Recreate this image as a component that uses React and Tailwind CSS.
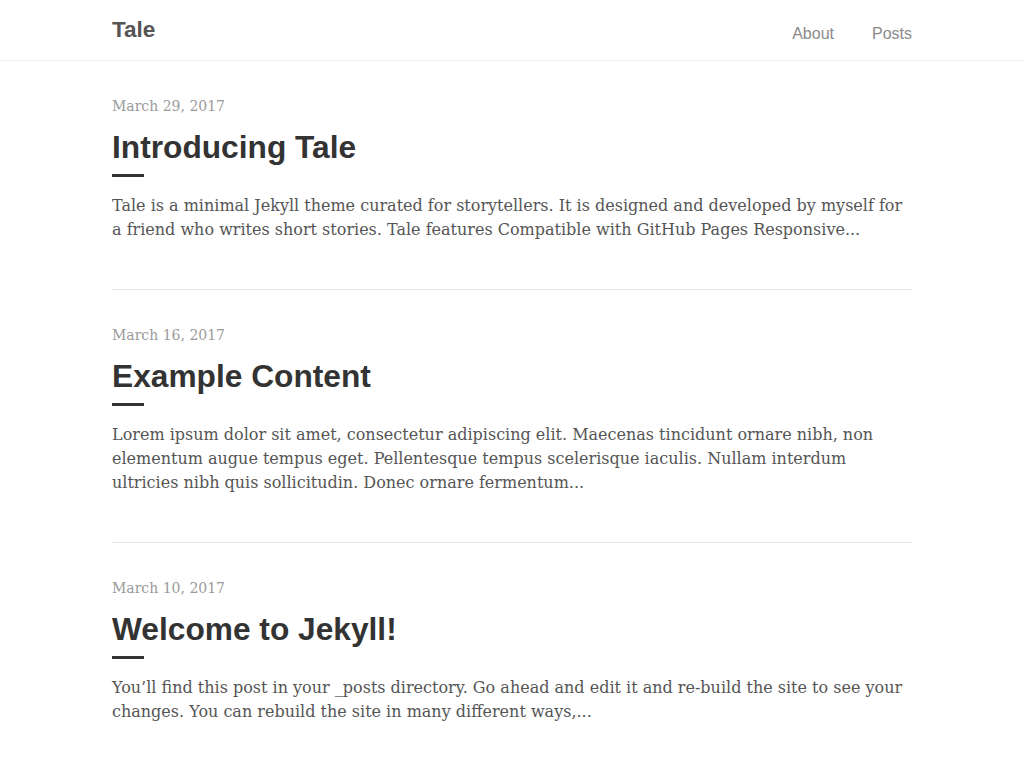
import React from 'react';

const posts = [
    {
        date: 'March 29, 2017',
        title: 'Introducing Tale',
        excerpt: 'Tale is a minimal Jekyll theme curated for storytellers. It is designed and developed by myself for a friend who writes short stories. Tale features Compatible with GitHub Pages Responsive...',
    },
    {
        date: 'March 16, 2017',
        title: 'Example Content',
        excerpt: 'Lorem ipsum dolor sit amet, consectetur adipiscing elit. Maecenas tincidunt ornare nibh, non elementum augue tempus eget. Pellentesque tempus scelerisque iaculis. Nullam interdum ultricies nibh quis sollicitudin. Donec ornare fermentum...',
    },
    {
        date: 'March 10, 2017',
        title: 'Welcome to Jekyll!',
        excerpt: 'You’ll find this post in your _posts directory. Go ahead and edit it and re-build the site to see your changes. You can rebuild the site in many different ways,...',
    },
];

const sans = "font-['Liberation_Sans',Arial,sans-serif]";
const serif = "font-['DejaVu_Serif','Liberation_Serif',serif]";

const Post = ({ post, last }) => (
    <article className={`pt-[33px] pb-[47px] ${last ? '' : 'border-b border-[#e8e8e8]'}`}>
        <div className={`${serif} h-6 leading-6 text-[14px] text-[#9a9a9a]`}>{post.date}</div>
        <h2 className={`${sans} mt-[9px] leading-[40px] text-[31.7px] font-bold text-[#333]`}>{post.title}</h2>
        <div className="mt-[7px] h-[3px] w-8 bg-[#333]" />
        <p className={`${serif} mt-[17px] leading-6 text-[16px] text-[#555]`}>{post.excerpt}</p>
    </article>
);

export default function App() {
    return (
        <div className="min-h-screen bg-white">
            <header className="border-b border-[#eeeeee]">
                <div className="mx-auto flex h-[60px] w-[800px] items-center justify-between">
                    <span className={`${sans} text-[22.5px] font-bold text-[#555] leading-none mt-[1px]`}>Tale</span>
                    <nav className={`${sans} flex gap-[38px] text-[16px] text-[#8a8a8a] mt-[7px]`}>
                        <a href="#">About</a>
                        <a href="#">Posts</a>
                    </nav>
                </div>
            </header>
            <main className="mx-auto w-[800px]">
                {posts.map((post, i) => (
                    <Post key={post.title} post={post} last={i === posts.length - 1} />
                ))}
            </main>
        </div>
    );
}
